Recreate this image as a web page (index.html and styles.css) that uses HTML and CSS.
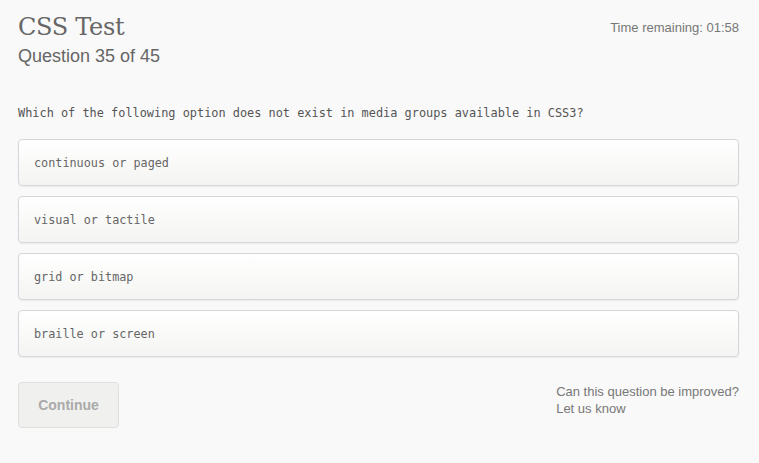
FILE: index.html
```html
<!DOCTYPE html>
<html>
<head>
<meta charset="utf-8">
<link rel="stylesheet" href="styles.css">
</head>
<body>
<div class="page">
  <header class="head">
    <div class="titles">
      <h1 class="title">CSS Test</h1>
      <div class="subtitle">Question 35 of 45</div>
    </div>
    <div class="timer">Time remaining: 01:58</div>
  </header>
  <p class="question">Which of the following option does not exist in media groups available in CSS3?</p>
  <div class="options">
    <div class="option">continuous or paged</div>
    <div class="option">visual or tactile</div>
    <div class="option">grid or bitmap</div>
    <div class="option">braille or screen</div>
  </div>
  <div class="foot">
    <button class="continue">Continue</button>
    <div class="feedback">Can this question be improved?<br>Let us know</div>
  </div>
</div>
</body>
</html>
```
FILE: styles.css
```css
html, body { margin: 0; padding: 0; background: #f9f9f9; }
body { font-family: "Liberation Sans", Arial, sans-serif; color: #666; }
.page { padding: 11px 20px 0 18px; }
.head { display: flex; justify-content: space-between; align-items: flex-start; }
.title { margin: 0; font-family: "DejaVu Serif", "Liberation Serif", serif; font-weight: normal; font-size: 24px; line-height: 32px; color: #666; letter-spacing: -0.3px; }
.subtitle { font-size: 18px; line-height: 22px; color: #666; margin-top: 2px; }
.timer { font-size: 13px; color: #777; margin-top: 9px; }
.question { margin: 38px 0 0 0; font-family: "DejaVu Sans Mono", monospace; font-size: 11.9px; line-height: 16px; color: #555; }
.options { display: flex; flex-direction: column; gap: 10px; margin-top: 18px; }
.option { box-sizing: border-box; height: 47px; display: flex; align-items: center; padding: 0 15px; border: 1px solid #d6d6da; border-radius: 4px; background: linear-gradient(#ffffff, #f4f4f2); box-shadow: 0 1px 2px rgba(0,0,0,0.06); font-family: "DejaVu Sans Mono", monospace; font-size: 11.8px; color: #666; }
.foot { display: flex; justify-content: space-between; align-items: flex-start; margin-top: 25px; }
.continue { width: 101px; height: 46px; border: 1px solid #dfdfdd; border-radius: 4px; background: #f0f0ee; color: #aaa; font-family: "Liberation Sans", Arial, sans-serif; font-weight: bold; font-size: 14px; padding: 0; }
.feedback { font-size: 13px; line-height: 17px; color: #777; margin-top: 1px; }
```
